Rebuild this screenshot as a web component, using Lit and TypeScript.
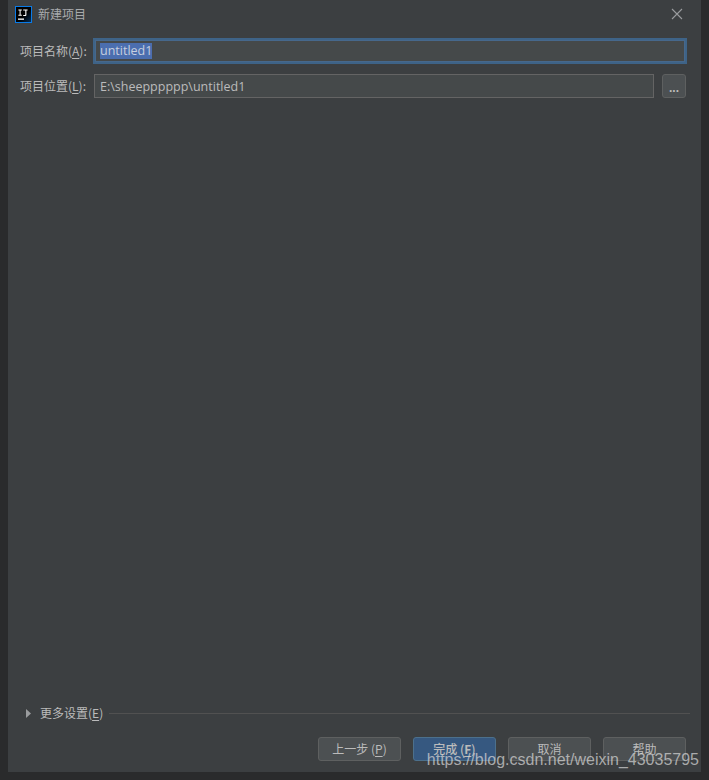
import { LitElement, html, css } from "lit";
import { customElement } from "lit/decorators.js";

@customElement("app-root")
export class AppRoot extends LitElement {
  static styles = css`
    :host {
      display: block;
      width: 709px;
      height: 780px;
      position: relative;
      overflow: hidden;
      background: #2a2b2c;
      font-family: "Noto Sans CJK SC", "Liberation Sans", sans-serif;
      font-size: 12px;
      color: #bbbbbb;
    }
    .dialog {
      box-sizing: border-box;
      width: 693px;
      height: 772px;
      margin-left: 8px;
      background: #3c3f41;
      display: flex;
      flex-direction: column;
    }
    .title {
      height: 28px;
      flex: none;
      display: flex;
      align-items: center;
      padding: 0 17px 0 7px;
      gap: 6px;
      color: #a9abad;
    }
    .logo { width: 17px; height: 17px; flex: none; }
    .title span { flex: 1; line-height: 16px; }
    .close { width: 14px; height: 14px; flex: none; }
    .form {
      flex: 1;
      padding: 10px 15px 0 12px;
      display: flex;
      flex-direction: column;
      gap: 10px;
    }
    .row {
      display: flex;
      align-items: center;
    }
    .label {
      width: 74px;
      flex: none;
      line-height: 16px;
      white-space: nowrap;
    }
    u { text-underline-offset: 2px; }
    b { font-weight: 700; }
    .field {
      box-sizing: border-box;
      height: 24px;
      flex: 1;
      background: #45494a;
      border: 1px solid #646464;
      padding: 0 5px;
      display: flex;
      align-items: center;
      font-family: "Open Sans", "Liberation Sans", sans-serif;
      font-size: 12.5px;
      color: #bbbbbb;
      white-space: nowrap;
    }
    .field.focus {
      height: 26px;
      margin-left: -1px;
      margin-right: -1px;
      border: 2px solid #3e6387;
      box-shadow: inset 0 0 0 1px #46688c;
      padding: 0 4px 0 5px;
    }
    .sel {
      background: #4b6eaf;
      color: #c6cfdf;
      height: 16px;
      line-height: 16px;
    }
    .browse {
      box-sizing: border-box;
      width: 24px;
      height: 24px;
      flex: none;
      margin-left: 8px;
      border: 1px solid #5e6060;
      border-radius: 3px;
      background: #4c5052;
      display: flex;
      align-items: flex-end;
      justify-content: center;
      font-family: "Liberation Sans", sans-serif;
      font-size: 12px;
      font-weight: 700;
      line-height: 17px;
      color: #bbbbbb;
    }
    .more {
      flex: none;
      height: 16px;
      display: flex;
      align-items: center;
      padding: 0 11px 0 18px;
      color: #bbbbbb;
    }
    .tri { width: 5px; height: 9px; flex: none; margin-right: 9px; }
    .more span { line-height: 16px; white-space: nowrap; }
    .rule { flex: 1; height: 1px; background: #515151; margin-left: 6px; }
    .actions {
      flex: none;
      display: flex;
      justify-content: flex-end;
      gap: 12px;
      padding: 16px 15px 11px 0;
    }
    .btn {
      box-sizing: border-box;
      width: 83px;
      height: 24px;
      border: 1px solid #5e6060;
      border-radius: 3px;
      background: #4c5052;
      color: #bbbbbb;
      display: flex;
      align-items: center;
      justify-content: center;
      line-height: 16px;
      white-space: nowrap;
    }
    .btn.primary {
      background: #365880;
      border-color: #4c708c;
      color: #bbbbbb;
      font-weight: 500;
    }
    .mark {
      position: absolute;
      right: 10px;
      top: 750px;
      font-family: "Liberation Sans", sans-serif;
      font-size: 16px;
      line-height: 20px;
      color: rgba(214, 214, 214, 0.72);
      white-space: nowrap;
    }
  `;

  render() {
    return html`
      <div class="dialog">
        <div class="title">
          <svg class="logo" viewBox="0 0 17 17">
            <defs>
              <linearGradient id="ij" x1="0" y1="0" x2="1" y2="1">
                <stop offset="0.55" stop-color="#000"/>
                <stop offset="1" stop-color="#06315c"/>
              </linearGradient>
            </defs>
            <rect x="0.5" y="0.5" width="16" height="16" fill="url(#ij)" stroke="#0a7be8"/>
            <rect x="3" y="12.5" width="6" height="1.3" fill="#fff"/>
            <path d="M3.4 3.5h3.4v1H5.6v4.2h1.2v1H3.4v-1h1.2V4.5H3.4zM8.2 3.5h4.4v1h-1.2v4.4c0 .6-.5 1-1.2 1H8.2v-1h1.5c.4 0 .6-.1.6-.5V4.5H8.2z" fill="#fff"/>
          </svg>
          <span>新建项目</span>
          <svg class="close" viewBox="0 0 14 14">
            <path d="M2 2l10 10M12 2L2 12" stroke="#9a9c9e" stroke-width="1.1" fill="none"/>
          </svg>
        </div>
        <div class="form">
          <div class="row">
            <div class="label">项目名称(<u>A</u>):</div>
            <div class="field focus"><span class="sel">untitled1</span></div>
          </div>
          <div class="row">
            <div class="label">项目位置(<u>L</u>):</div>
            <div class="field">E:\\sheepppppp\\untitled1</div>
            <div class="browse">...</div>
          </div>
        </div>
        <div class="more">
          <svg class="tri" viewBox="0 0 5 9"><path d="M0 0l5 4.5L0 9z" fill="#9a9c9e"/></svg>
          <span>更多设置(<u>E</u>)</span>
          <div class="rule"></div>
        </div>
        <div class="actions">
          <div class="btn">上一步 (<u>P</u>)</div>
          <div class="btn primary">完成 (<b><u>F</u></b>)</div>
          <div class="btn">取消</div>
          <div class="btn">帮助</div>
        </div>
      </div>
      <div class="mark">https://blog.csdn.net/weixin_43035795</div>
    `;
  }
}
